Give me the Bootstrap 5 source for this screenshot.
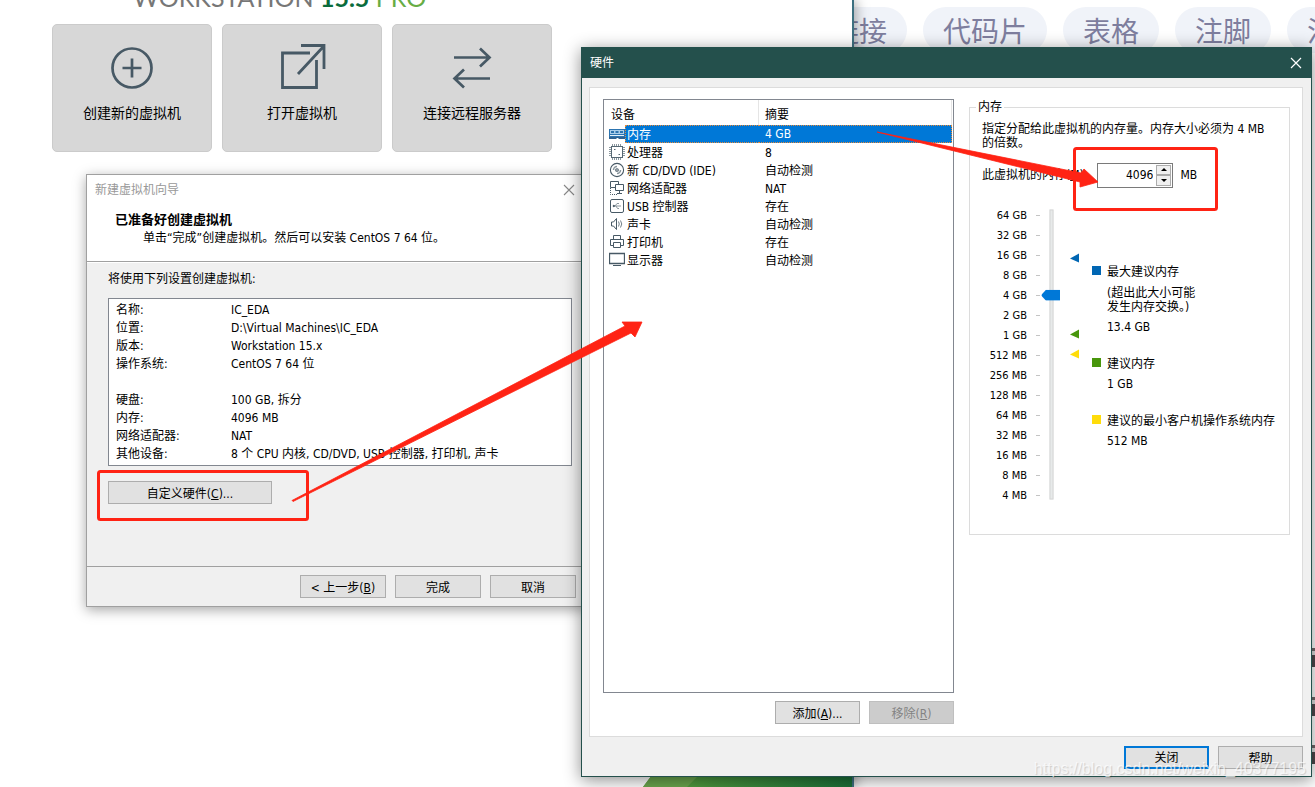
<!DOCTYPE html>
<html lang="zh-CN">
<head>
<meta charset="utf-8">
<meta name="viewport" content="width=device-width, initial-scale=1">
<title>VMware Workstation</title>
<link href="https://cdn.jsdelivr.net/npm/bootstrap@5.3.0/dist/css/bootstrap.min.css" rel="stylesheet">
<style>
  body { font-family: "DejaVu Sans Condensed", "Noto Sans CJK SC", sans-serif; font-size: 12px; line-height: 18px; color: #000; background: #fff; }
  .desktop { height: 100vh; }
  .pill-row { padding: 7px 0 0 811px; gap: 16px; }
  .topic { flex: none; font-family: "Noto Sans CJK SC", sans-serif; font-weight: 400; font-size: 28px; line-height: 46px; padding: 0 20px; border-radius: 24px; background: #f0f3f9; color: #7e7e9e; text-decoration: none; }
  .fragment { right: 0; width: 3px; height: 19px; border-top: 3px solid #72676a; background: linear-gradient(#ddd 4px, #50484c 4px); }
  .vm-home { left: 0; top: 0; bottom: 0; width: 854px; background: #fff; border-right: 2px solid #3d7080; box-shadow: 2px 0 12px rgba(0,0,0,.35); }
  .vm-brand { font-family: Lato, sans-serif; font-weight: 400; font-size: 25px; line-height: 24px; margin: -15px 0 0 133px; color: #777; white-space: nowrap; }
  .vm-brand strong { color: #0b6c3c; font-weight: 700; }
  .vm-brand span { color: #67ad45; }
  .home-cards { padding: 15px 0 0 52px; gap: 10px; }
  .home-card { width: 160px; height: 128px; border: 1px solid #cbcbcb; border-radius: 5px; background: #d7d7d7; color: #000; padding: 16px 0 0; font-family: "Noto Sans CJK SC", sans-serif; font-size: 14px; line-height: 18px; }
  .home-card svg { margin-bottom: 8px; }
  .vm-logo { left: 643px; right: 0; bottom: 0; height: 12px; }
  .dialog-window { position: absolute; display: flex; flex-direction: column; background: #f0f0f0; }
  .wizard { left: 86px; top: 174px; width: 501px; height: 433px; border: 1px solid #a0a0a0; box-shadow: 0 3px 12px rgba(0,0,0,.35); }
  .wizard-head { height: 87px; background: #fff; border-bottom: 1px solid #a0a0a0; }
  .wizard-title { height: 28px; padding: 2px 11px 0 8px; color: #999; }
  .wizard-title h2, .hw-title h2 { font-size: 12px; line-height: 18px; font-weight: 400; margin: 0; }
  .head-main { font-size: 13px; }
  .bare { border: 0; padding: 0; background: none; line-height: 0; color: inherit; }
  .wizard-body { padding: 7px 14px 0 21px; border-top: 1px solid #fff; }
  .summary-box { margin: 10px 0 15px; height: 168px; border: 1px solid #828790; background: #fff; padding: 2px 7px; display: grid; grid-template-columns: 115px 1fr; grid-template-rows: 18px 18px 18px 18px 36px; grid-auto-rows: 18px; }
  .summary-box dt, .summary-box dd { font-weight: 400; margin: 0; white-space: nowrap; }
  .summary-box .after-gap { margin-top: 18px; }
  .win-btn { font-size: 12px; line-height: 18px; width: 85px; height: 23px; padding: 2px 4px 0; border: 1px solid #adadad; border-radius: 0; background: #e1e1e1; color: #000; }
  .win-btn:disabled { background: #ccc; border-color: #bfbfbf; color: #838383; opacity: 1; }
  .win-btn.focused { border: 2px solid #0078d7; padding: 1px 3px 0; }
  .wide-btn { width: 164px; }
  .wizard-foot { margin-top: auto; border-top: 1px solid #a0a0a0; padding: 8px 10px; gap: 9px; }
  .wizard-foot .win-btn { width: 86px; }
  .hardware { left: 581px; right: 3px; top: 47px; bottom: 10px; border: 1px solid #24504c; box-shadow: 0 3px 16px rgba(0,0,0,.45); }
  .hw-title { height: 30px; flex: none; background: #24504c; color: #fff; padding: 0 9px 0 8px; }
  .hw-body { margin: 9px 8px 0 7px; border: 1px solid #dcdcdc; background: #fff; padding: 11px 12px 12px 13px; gap: 15px; }
  .device-col { width: 351px; flex: none; }
  .device-list { border: 1px solid #828790; padding-right: 1px; }
  .device-list table { width: 100%; table-layout: fixed; border-collapse: separate; border-spacing: 0; }
  .device-list th { font-weight: 400; height: 25px; line-height: 18px; padding: 4px 6px 0; border-right: 1px solid #e5e5e5; }
  .device-list th:first-child { width: 155px; padding-left: 7px; }
  .device-list td { height: 18px; padding: 2px 6px 0; line-height: 16px; white-space: nowrap; }
  .device-list td:first-child { padding: 0 0 0 5px; }
  .device-name { display: flex; align-items: center; height: 18px; }
  .device-name svg { flex: none; }
  .device-name span { flex: 1; height: 18px; padding: 2px 0 0 2px; line-height: 16px; }
  .chosen .device-name span { background: #0078d7; color: #fff; border: 1px dotted #e58a3a; border-right: 0; padding: 1px 0 0 1px; }
  .chosen td:last-child { background: #0078d7; color: #fff; border: 1px dotted #e58a3a; border-left: 0; padding-top: 0; line-height: 16px; }
  .memory-box { align-self: flex-start; height: 436px; border: 1px solid #dcdcdc; padding: 7px 12px 0 12px; min-width: 0; }
  .memory-box legend { float: none; width: auto; font-size: 12px; line-height: 16px; margin: 0 0 0 -6px; padding: 0 2px; }
  .memory-box p { line-height: 14px; margin: 0; }
  .mem-row { margin-top: 13px; height: 24px; }
  .mem-input { width: 76px; height: 25px; border: 1px solid #7a7a7a; background: #fff; margin-left: 10px; margin-right: 7px; padding: 1px; }
  .mem-input input { width: 54px; border: 0; padding: 0; text-align: right; outline: 0; background: none; appearance: textfield; line-height: 18px; }
  .mem-input input::-webkit-inner-spin-button { display: none; }
  .spin { width: 16px; margin-left: 3px; }
  .spin button { flex: 1; border: 1px solid #acacac; background: #f0f0f0; padding: 0; line-height: 0; }
  .scale-area { margin-top: 19px; }
  .scale { width: 45px; list-style: none; margin: 0; padding: 0; font-size: 11px; line-height: 20px; text-align: right; white-space: nowrap; }
  .ticks { width: 4px; margin: 0 1px 0 9px; background: repeating-linear-gradient(transparent 0 9px, #c4c4c4 9px 10px, transparent 10px 20px); }
  .slider-slot { position: relative; width: 19px; }
  .slider-slot input { position: absolute; left: -135px; top: 139px; width: 290px; height: 19px; margin: 0; appearance: none; background: none; transform: rotate(-90deg); }
  .slider-slot input::-webkit-slider-runnable-track { height: 4px; background: #e7eaea; border: 1px solid #d6d6d6; box-sizing: border-box; }
  .slider-slot input::-webkit-slider-thumb { appearance: none; width: 11px; height: 19px; margin-top: -9px; background: #0078d7; clip-path: polygon(50% 0, 100% 5px, 100% 100%, 0 100%, 0 5px); }
  .legend-list { margin: 58px 0 0 12px; }
  .legend-list dt { font-weight: 400; position: relative; margin-bottom: 4px; padding-left: 15px; line-height: 16px; white-space: nowrap; }
  .legend-list dt::before { content: ""; position: absolute; left: 0; top: 2px; width: 9px; height: 9px; background: var(--key); }
  .legend-list dd { margin: 0 0 21px; padding-left: 15px; line-height: 16px; }
  .legend-list dd.hint { line-height: 14px; margin: 6px 0 5px; }
  .key-max { --key: #0066b3; } .key-rec { --key: #48960c; } .key-min { --key: #ffdc0a; }
  .hw-foot { padding: 9px 8px 7px; gap: 9px; }
  .marks { position: absolute; left: 0; top: 0; width: 1315px; height: 787px; pointer-events: none; }
  .watermark { position: absolute; right: 9px; bottom: 9px; font-family: "Liberation Sans", sans-serif; font-size: 16px; line-height: 18px; color: rgba(255,255,255,.7); text-shadow: 1px 1px 1px rgba(0,0,0,.15); pointer-events: none; }
</style>
</head>
<body>
<div class="desktop position-relative overflow-hidden">

  <nav class="pill-row d-flex" aria-label="主题">
    <a class="topic" href="#">链接</a><a class="topic" href="#">代码片</a><a class="topic" href="#">表格</a><a class="topic" href="#">注脚</a><a class="topic" href="#">注释</a>
  </nav>
  <i class="fragment position-absolute" style="top:648px"></i>
  <i class="fragment position-absolute" style="top:697px"></i>
  <i class="fragment position-absolute" style="top:745px"></i>

  <main class="vm-home position-absolute">
    <div class="vm-brand">WORKSTATION <strong>15.5</strong> <span>PRO</span></div>
    <div class="home-cards d-flex">
      <button class="home-card d-flex flex-column align-items-center" type="button">
        <svg width="54" height="54" viewBox="0 0 54 54" fill="none" stroke="#475965" stroke-width="2.700"><circle cx="27" cy="27" r="19.500"/><path d="M27 17.500v19M17.500 27h19"/></svg>创建新的虚拟机
      </button>
      <button class="home-card d-flex flex-column align-items-center" type="button">
        <svg width="54" height="54" viewBox="0 0 54 54" fill="none" stroke="#475965" stroke-width="2.800"><path d="M35 12H7.500v34.500h34V19"/><path d="M26 4.500h23V28M23 33 48.500 5.500"/></svg>打开虚拟机
      </button>
      <button class="home-card d-flex flex-column align-items-center" type="button">
        <svg width="54" height="54" viewBox="0 0 54 54" fill="none" stroke="#475965" stroke-width="2.700"><path d="M9 16.500h35M35 7.500l9.500 9-9.500 9M45 37.500H10M19 28.500l-9.500 9 9.500 9"/></svg>连接远程服务器
      </button>
    </div>
    <svg class="vm-logo position-absolute" viewBox="0 0 209 12" preserveAspectRatio="none" aria-hidden="true">
      <defs><linearGradient id="lg"><stop offset="0" stop-color="#61aa41"/><stop offset=".35" stop-color="#45913c"/><stop offset="1" stop-color="#1b7038"/></linearGradient></defs>
      <path d="M0 12 9 0H209V12z" fill="url(#lg)"/><path d="M0 12 9 0H56L44 12z" fill="#6aa54d"/>
    </svg>
  </main>

  <section class="dialog-window wizard" aria-label="新建虚拟机向导">
    <div class="wizard-head">
      <div class="wizard-title d-flex align-items-center justify-content-between">
        <h2>新建虚拟机向导</h2>
        <button class="bare" type="button" aria-label="关闭"><svg width="12" height="12" viewBox="0 0 12 12" stroke="#888" stroke-width="1.100"><path d="M1 1l10 10M11 1 1 11"/></svg></button>
      </div>
      <div class="ps-4 ms-1 pt-2"><div class="head-main fw-bold">已准备好创建虚拟机</div><div class="ps-4 ms-1">单击“完成”创建虚拟机。然后可以安装 CentOS 7 64 位。</div></div>
    </div>
    <div class="wizard-body">
      <div>将使用下列设置创建虚拟机:</div>
      <dl class="summary-box">
        <dt>名称:</dt><dd>IC_EDA</dd>
        <dt>位置:</dt><dd>D:\Virtual Machines\IC_EDA</dd>
        <dt>版本:</dt><dd>Workstation 15.x</dd>
        <dt>操作系统:</dt><dd>CentOS 7 64 位</dd>
        <dt class="after-gap">硬盘:</dt><dd class="after-gap">100 GB, 拆分</dd>
        <dt>内存:</dt><dd>4096 MB</dd>
        <dt>网络适配器:</dt><dd>NAT</dd>
        <dt>其他设备:</dt><dd>8 个 CPU 内核, CD/DVD, USB 控制器, 打印机, 声卡</dd>
      </dl>
      <button class="win-btn wide-btn" type="button">自定义硬件(<u>C</u>)...</button>
    </div>
    <div class="wizard-foot d-flex justify-content-end">
      <button class="win-btn" type="button">&lt; 上一步(<u>B</u>)</button>
      <button class="win-btn" type="button">完成</button>
      <button class="win-btn" type="button">取消</button>
    </div>
  </section>

  <section class="dialog-window hardware" aria-label="硬件">
    <div class="hw-title d-flex align-items-center justify-content-between">
      <h2>硬件</h2>
      <button class="bare" type="button" aria-label="关闭"><svg width="12" height="12" viewBox="0 0 12 12" stroke="#fff" stroke-width="1.200"><path d="M1 1l10 10M11 1 1 11"/></svg></button>
    </div>
    <div class="hw-body d-flex flex-grow-1">
      <div class="device-col d-flex flex-column">
        <div class="device-list flex-grow-1">
          <table>
            <thead><tr><th scope="col">设备</th><th scope="col">摘要</th></tr></thead>
            <tbody>
              <tr class="chosen"><td><div class="device-name"><svg width="16" height="16" viewBox="0 0 16 16"><path d="M0 3h16v8H0z" fill="#2c74b0"/><path d="M1 4h14v4H1z" fill="#a9cdea"/><path d="M2 5h3v2H2zM6.500 5h3v2h-3zM11 5h3v2h-3z" fill="#2c74b0"/><path d="M1 9h14v1H1z" fill="#e3f0fa"/><path d="M0 11h16v2H9.500v-1h-2v1H0z" fill="#2f6292"/></svg><span>内存</span></div></td><td>4 GB</td></tr>
              <tr><td><div class="device-name"><svg width="16" height="16" viewBox="0 0 16 16" fill="none" stroke="#566873"><path d="M3.500 0v16M5.500 0v16M7.500 0v16M9.500 0v16M11.500 0v16M0 3.500h16M0 5.500h16M0 7.500h16M0 9.500h16M0 11.500h16" stroke="#8b979e"/><rect x="2.500" y="2.500" width="11" height="11" fill="#fff"/><path d="M5 5.500h1.500M9.500 10.500H11"/></svg><span>处理器</span></div></td><td>8</td></tr>
              <tr><td><div class="device-name"><svg width="16" height="16" viewBox="0 0 16 16" fill="none" stroke="#475965" stroke-width="1.100"><circle cx="8" cy="8" r="6.600"/><circle cx="8" cy="8" r="1.300"/><path d="M8 4.500a3.500 3.500 0 0 0-3.500 3.500M8 11.500A3.500 3.500 0 0 0 11.500 8" stroke="#8b979e" stroke-width="1.500"/></svg><span>新 CD/DVD (IDE)</span></div></td><td>自动检测</td></tr>
              <tr><td><div class="device-name"><svg width="16" height="16" viewBox="0 0 16 16" fill="none" stroke="#475965"><path d="M1.500 1.500h8v6h-8z"/><path d="M6.500 4.500h8v6h-8z" fill="#fff"/><path d="M10.500 11v2M8 13.500h5"/><path d="M1.500 8v6.500H9" stroke-dasharray="1 1"/></svg><span>网络适配器</span></div></td><td>NAT</td></tr>
              <tr><td><div class="device-name"><svg width="16" height="16" viewBox="0 0 16 16" fill="none" stroke="#475965"><rect x="1.500" y="1.500" width="13" height="13" rx="1.500"/><path d="M4 8h8M6 8l2-2.500h2M7 8l1.500 2.500H10" stroke="#8b979e"/><circle cx="4.800" cy="8" r=".7" fill="#475965"/></svg><span>USB 控制器</span></div></td><td>存在</td></tr>
              <tr><td><div class="device-name"><svg width="16" height="16" viewBox="0 0 16 16" fill="none" stroke="#475965"><path d="M2.500 6h2l3-3.500v11l-3-3.500h-2z"/><path d="M9.500 5.500q1.500 2.500 0 5M11.500 4.500q2.500 3.500 0 7" stroke="#718089"/></svg><span>声卡</span></div></td><td>自动检测</td></tr>
              <tr><td><div class="device-name"><svg width="16" height="16" viewBox="0 0 16 16" fill="none" stroke="#475965"><path d="M4.500 6V1.500h7V6M4 11.500H1.500v-6h13v6H12"/><path d="M4.500 8.500h7v5h-7z"/></svg><span>打印机</span></div></td><td>存在</td></tr>
              <tr><td><div class="device-name"><svg width="16" height="16" viewBox="0 0 16 16" fill="none" stroke="#475965"><path d="M.5 1.500h15v10H.5z" stroke-width="1.300"/><path d="M4 13.500h8"/></svg><span>显示器</span></div></td><td>自动检测</td></tr>
            </tbody>
          </table>
        </div>
        <div class="d-flex justify-content-end mt-2" style="gap:9px">
          <button class="win-btn" type="button">添加(<u>A</u>)...</button>
          <button class="win-btn" type="button" disabled>移除(<u>R</u>)</button>
        </div>
      </div>

      <fieldset class="memory-box flex-grow-1">
        <legend>内存</legend>
        <p>指定分配给此虚拟机的内存量。内存大小必须为 4 MB 的倍数。</p>
        <div class="mem-row d-flex align-items-center">
          <label for="mem">此虚拟机的内存(<u>M</u>):</label>
          <div class="mem-input d-flex align-items-stretch">
            <input id="mem" type="number" value="4096">
            <div class="spin d-flex flex-column">
              <button type="button" aria-label="增加"><svg width="6" height="3" viewBox="0 0 6 3"><path d="M3 0l3 3H0z"/></svg></button>
              <button type="button" aria-label="减少"><svg width="6" height="3" viewBox="0 0 6 3"><path d="M0 0h6L3 3z"/></svg></button>
            </div>
          </div>
          <span>MB</span>
        </div>
        <div class="scale-area d-flex">
          <ul class="scale"><li>64 GB</li><li>32 GB</li><li>16 GB</li><li>8 GB</li><li>4 GB</li><li>2 GB</li><li>1 GB</li><li>512 MB</li><li>256 MB</li><li>128 MB</li><li>64 MB</li><li>32 MB</li><li>16 MB</li><li>8 MB</li><li>4 MB</li></ul>
          <div class="ticks"></div>
          <div class="slider-slot"><input type="range" min="0" max="14" value="10" aria-label="内存大小"></div>
          <svg width="20" height="300" viewBox="0 0 20 300" aria-hidden="true"><path d="M10 52.500l9-5v9z" fill="#0066b3"/><path d="M10 128.500l9-5v9z" fill="#48960c"/><path d="M10 148.500l9-5v9z" fill="#ffdc0a"/></svg>
          <dl class="legend-list">
            <dt class="key-max">最大建议内存</dt>
            <dd class="hint">(超出此大小可能<br>发生内存交换。)</dd>
            <dd>13.4 GB</dd>
            <dt class="key-rec">建议内存</dt>
            <dd>1 GB</dd>
            <dt class="key-min">建议的最小客户机操作系统内存</dt>
            <dd>512 MB</dd>
          </dl>
        </div>
      </fieldset>
    </div>
    <div class="hw-foot d-flex justify-content-end">
      <button class="win-btn focused" type="button">关闭</button>
      <button class="win-btn" type="button">帮助</button>
    </div>
  </section>

  <svg class="marks" viewBox="0 0 1315 787" fill="none" stroke="#ff2314" aria-hidden="true">
    <rect x="98.500" y="471.500" width="209" height="48" rx="2" stroke-width="3"/>
    <rect x="1074.500" y="148.500" width="142" height="61" rx="2" stroke-width="3"/>
    <path d="M292 500.500 L625 326 L622 322 L642 322 L635 337 L631 333 L293 501.500Z" fill="#ff2314" stroke-width=".8"/>
    <path d="M877 132 L1081 173 L1084 169 L1098 182 L1080 187 L1080 182Z" fill="#ff2314" stroke-width=".8"/>
  </svg>
  <div class="watermark">https://blog.csdn.net/weixin_40377195</div>
</div>
<script src="https://cdn.jsdelivr.net/npm/bootstrap@5.3.0/dist/js/bootstrap.bundle.min.js"></script>
</body>
</html>
